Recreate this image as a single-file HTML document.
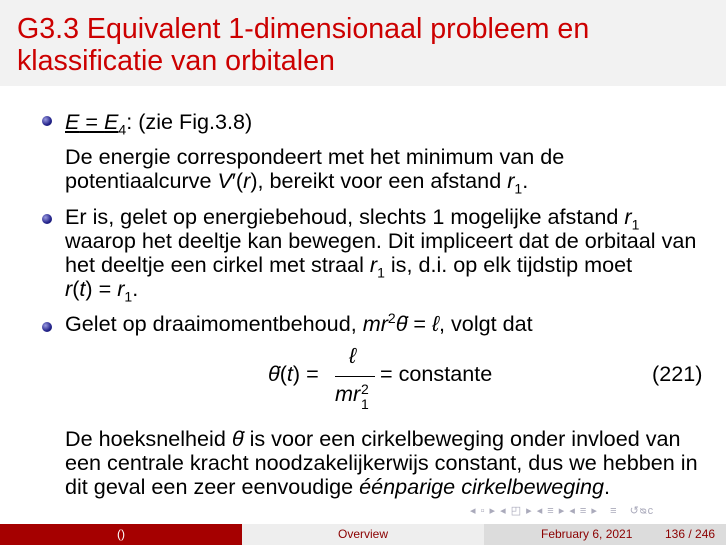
<!DOCTYPE html>
<html><head><meta charset="utf-8"><style>
*{margin:0;padding:0}
body{width:726px;height:545px;position:relative;overflow:hidden;background:#fff;font-family:"Liberation Sans",sans-serif;color:#000}
.hd{position:absolute;left:0;top:0;width:726px;height:86px;background:#f2f2f2}
.t{position:absolute;left:17px;color:#cc0000;font-size:28.6px;line-height:32px;white-space:nowrap}
.l{position:absolute;left:65px;font-size:21.6px;line-height:24px;white-space:nowrap}
.b{position:absolute;left:42px;width:10px;height:10px;border-radius:50%;background:radial-gradient(circle at 35% 35%,#9a9ae0,#22228a 60%,#10105a)}
i{font-style:italic}
sub,sup{font-size:14px;line-height:0}
.ft{position:absolute;top:524px;height:21px;font-size:12px;line-height:21px;text-align:center;color:#8b0000}
.nav{position:absolute;left:470px;top:504px;font-size:11px;color:#aab;letter-spacing:1px}
.s{position:absolute;font-size:14px;line-height:14px}
</style></head><body>
<div class="hd"></div>
<div class="t" style="top:13px">G3.3 Equivalent 1-dimensionaal probleem en</div>
<div class="t" style="top:45px">klassificatie van orbitalen</div>

<div class="b" style="top:116px"></div>
<div class="l" style="top:110px"><span style="text-decoration:underline"><i>E</i> = <i>E</i><sub>4</sub></span>: (zie Fig.3.8)</div>
<div class="l" style="top:145px">De energie correspondeert met het minimum van de</div>
<div class="l" style="top:169px">potentiaalcurve <i>V</i>′(<i>r</i>), bereikt voor een afstand <i>r</i><sub>1</sub>.</div>
<div class="b" style="top:214px"></div>
<div class="l" style="top:205px">Er is, gelet op energiebehoud, slechts 1 mogelijke afstand <i>r</i><sub>1</sub></div>
<div class="l" style="top:229px">waarop het deeltje kan bewegen. Dit impliceert dat de orbitaal van</div>
<div class="l" style="top:253px">het deeltje een cirkel met straal <i>r</i><sub>1</sub> is, d.i. op elk tijdstip moet</div>
<div class="l" style="top:277px"><i>r</i>(<i>t</i>) = <i>r</i><sub>1</sub>.</div>
<div class="b" style="top:322px"></div>
<div class="l" style="top:312px">Gelet op draaimomentbehoud, <i>mr</i><sup>2</sup><i>θ̇</i> = <i>ℓ</i>, volgt dat</div>

<div class="l" style="left:268px;top:362px"><i>θ̇</i>(<i>t</i>) =</div>
<div class="l" style="left:349px;top:344px"><i>ℓ</i></div>
<div style="position:absolute;left:335px;top:376px;width:40px;height:1px;background:#000"></div>
<div class="l" style="left:335px;top:382px"><i>mr</i></div>
<div class="s" style="left:361px;top:382px">2</div>
<div class="s" style="left:361px;top:397px">1</div>
<div class="l" style="left:380px;top:362px">= constante</div>
<div class="l" style="left:652px;top:362px">(221)</div>

<div class="l" style="top:427px">De hoeksnelheid <i>θ̇</i> is voor een cirkelbeweging onder invloed van</div>
<div class="l" style="top:451px">een centrale kracht noodzakelijkerwijs constant, dus we hebben in</div>
<div class="l" style="top:475px">dit geval een zeer eenvoudige <i>éénparige cirkelbeweging</i>.</div>

<div class="nav">◂ ▫ ▸ ◂ ◰ ▸ ◂ ≡ ▸ ◂ ≡ ▸ &nbsp; ≡ &nbsp; ↺ᴓᴄ</div>
<div class="ft" style="left:0;width:242px;background:#a50000;color:#fff">()</div>
<div class="ft" style="left:242px;width:242px;background:#eeeeee">Overview</div>
<div class="ft" style="left:484px;width:242px;background:#dcdcdc;text-align:left"><span style="position:absolute;left:57px">February 6, 2021</span><span style="position:absolute;left:181px">136 / 246</span></div>
</body></html>
